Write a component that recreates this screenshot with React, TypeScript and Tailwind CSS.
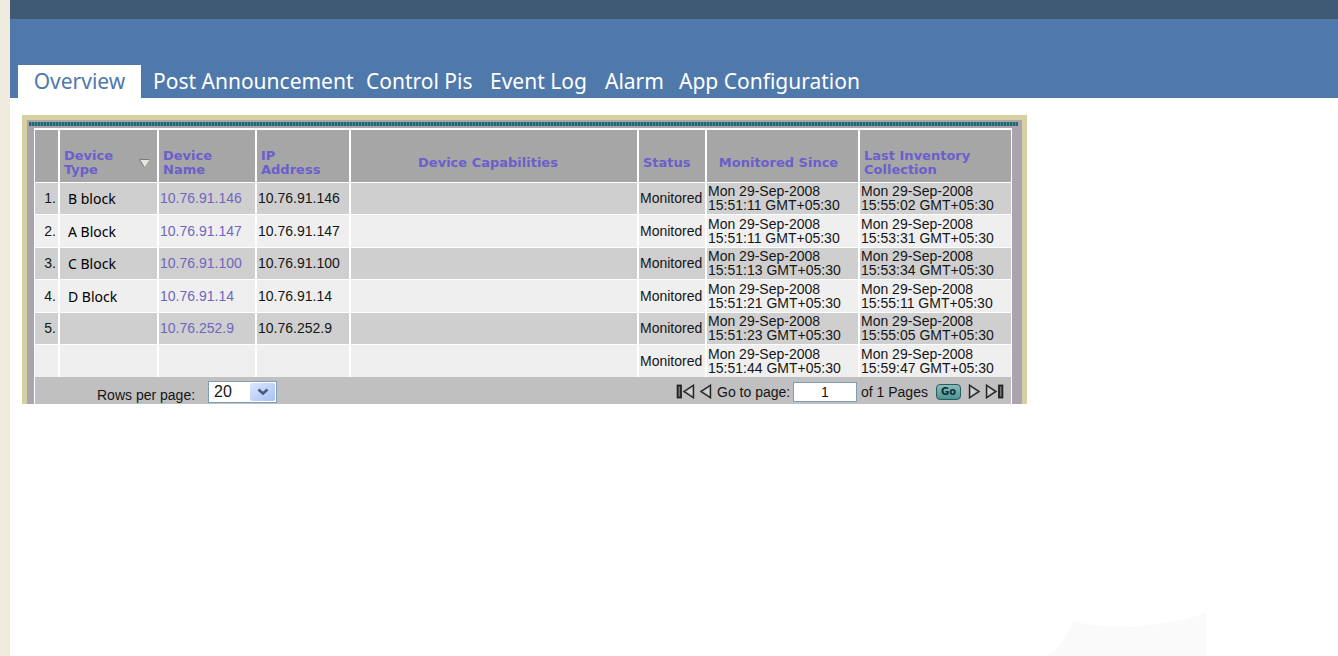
import { useState } from "react";

const tabs = [
  { label: "Post Announcement", width: "w-[213px]" },
  { label: "Control Pis", width: "w-[124px]" },
  { label: "Event Log", width: "w-[115px]" },
  { label: "Alarm", width: "w-[74px]" },
  { label: "App Configuration", width: "w-[200px]" },
];

const rows = [
  { n: "1.", type: "B block", ip: "10.76.91.146", since: "15:51:11", last: "15:55:02" },
  { n: "2.", type: "A Block", ip: "10.76.91.147", since: "15:51:11", last: "15:53:31" },
  { n: "3.", type: "C Block", ip: "10.76.91.100", since: "15:51:13", last: "15:53:34" },
  { n: "4.", type: "D Block", ip: "10.76.91.14", since: "15:51:21", last: "15:55:11" },
  { n: "5.", type: "", ip: "10.76.252.9", since: "15:51:23", last: "15:55:05" },
  { n: "", type: "", ip: "", since: "15:51:44", last: "15:59:47" },
];

function Stamp({ time }: { time: string }) {
  return (
    <>
      Mon 29-Sep-2008
      <br />
      {time} GMT+05:30
    </>
  );
}

function PagerIcon({ forward, edge }: { forward?: boolean; edge?: boolean }) {
  const width = edge ? 19 : 12;
  return (
    <svg
      width={width}
      height="15"
      viewBox={`0 0 ${width} 15`}
      className={forward ? "" : "rotate-180"}
      fill="#b4b4b4"
      stroke="#222"
      strokeWidth="1.4"
      aria-hidden="true"
    >
      <path d="M1.5 1.2V13.8L11 7.5Z" />
      <path d="M3 4V11L8 7.5Z" fill="#d4d4d4" stroke="none" />
      {edge && <rect x="14" y="1.5" width="3.4" height="12" fill="#777" strokeWidth="1.8" />}
    </svg>
  );
}

function Header() {
  return (
    <header className="border-t-[19px] border-[#3f5b74] bg-[#4f79ab] pt-[46px]">
      <nav className="flex h-[33px] pl-2 font-['Noto_Sans',sans-serif] text-[21px] leading-8 whitespace-nowrap text-white">
        <a href="#overview" className="w-[123px] bg-white text-center text-[#4f79ab]">
          Overview
        </a>
        <div className="flex pl-3">
          {tabs.map((t) => (
            <a key={t.label} href="#tab" className={t.width}>
              {t.label}
            </a>
          ))}
        </div>
      </nav>
    </header>
  );
}

const cell = "border-l-2 border-white p-0 pl-px";
const head = "border-l-2 border-white p-0 pl-1 pt-[15px] text-left";

function DeviceTable() {
  return (
    <table className="w-full table-fixed border-collapse leading-[14px]">
      <colgroup>
        <col className="w-[24px]" />
        <col className="w-[99px]" />
        <col className="w-[98px]" />
        <col className="w-[94px]" />
        <col />
        <col className="w-[68px]" />
        <col className="w-[153px]" />
        <col className="w-[152px]" />
      </colgroup>
      <thead>
        <tr className="h-[52px] bg-[#a6a6a6] font-['DejaVu_Sans',sans-serif] text-[13px] leading-[14px] text-[#6a5fcb]">
          <th />
          <th className={head}>
            <div className="flex items-center justify-between pr-[7px]">
              <span>
                Device
                <br />
                Type
              </span>
              <svg width="11" height="9" viewBox="0 0 11 9" aria-hidden="true">
                <path d="M0.5 0.5H10.5L5.5 8.5Z" fill="#e6e6dc" />
                <path d="M0.5 0.5H10.5M0.5 0.5L5.5 8.5" stroke="#7c7c7c" fill="none" />
              </svg>
            </div>
          </th>
          <th className={head}>
            Device
            <br />
            Name
          </th>
          <th className={head}>
            IP
            <br />
            Address
          </th>
          <th className="border-l-2 border-white p-0 pt-[15px] pr-3">Device Capabilities</th>
          <th className={head}>Status</th>
          <th className="border-l-2 border-white p-0 pt-[15px] pr-2">Monitored Since</th>
          <th className={head}>
            Last Inventory
            <br />
            Collection
          </th>
        </tr>
      </thead>
      <tbody>
        {rows.map((r) => (
          <tr
            key={r.since + r.last}
            className="border-t border-white odd:h-8 odd:bg-[#cfcfcf] even:h-[33px] even:bg-[#efefef]"
          >
            <td className="p-0 pr-[2px] text-right">{r.n}</td>
            <td className="border-l-2 border-white p-0 pt-[2px] pl-2 font-['Noto_Sans',sans-serif] text-sm leading-[14px] text-black">
              {r.type}
            </td>
            <td className={cell}>
              {r.ip && (
                <a href="#device" className="text-[#7066bd]">
                  {r.ip}
                </a>
              )}
            </td>
            <td className={cell}>{r.ip}</td>
            <td className={cell} />
            <td className={cell}>Monitored</td>
            <td className={cell}>
              <Stamp time={r.since} />
            </td>
            <td className={cell}>
              <Stamp time={r.last} />
            </td>
          </tr>
        ))}
      </tbody>
    </table>
  );
}

function Pager() {
  const [size, setSize] = useState("20");
  const [page, setPage] = useState("1");
  return (
    <div className="flex h-[27px] items-center justify-between bg-[#c0c0c0] pt-[2px] pr-[7px] pl-[62px]">
      <div className="flex items-center">
        <label htmlFor="rows" className="w-[111px] pt-[6px] whitespace-nowrap">
          Rows per page:
        </label>
        <div className="relative">
          <select
            id="rows"
            value={size}
            onChange={(e) => setSize(e.target.value)}
            className="block h-[22px] w-[69px] appearance-none border border-[#7f9db9] bg-white pl-[5px] text-base leading-5"
          >
            <option>20</option>
            <option>50</option>
          </select>
          <span className="pointer-events-none absolute inset-y-[2px] right-[2px] flex w-[25px] items-center justify-center rounded-xs bg-linear-to-br from-[#dbe6fe] to-[#a9c1f3]">
            <svg width="12" height="8" viewBox="0 0 12 8" aria-hidden="true">
              <path d="M1.5 1.5L6 5.5L10.5 1.5" fill="none" stroke="#46597f" strokeWidth="2.6" />
            </svg>
          </span>
        </div>
      </div>
      <div className="flex items-center">
        <button type="button" aria-label="First page" className="mr-[5px]">
          <PagerIcon edge />
        </button>
        <button type="button" aria-label="Previous page" className="mr-[5px]">
          <PagerIcon />
        </button>
        <label htmlFor="page" className="w-[76px] whitespace-nowrap">
          Go to page:
        </label>
        <input
          id="page"
          value={page}
          onChange={(e) => setPage(e.target.value)}
          className="mr-1 h-5 w-16 border border-[#7f9db9] bg-white text-center"
        />
        <span className="w-[75px] whitespace-nowrap">of 1 Pages</span>
        <button
          type="button"
          className="mr-[7px] h-4 w-[25px] rounded border border-[#285b5d] bg-linear-to-b from-[#8cbcbc] to-[#4c9494] font-['DejaVu_Sans',sans-serif] text-[10px] leading-3 font-bold text-[#0d2c30]"
        >
          Go
        </button>
        <button type="button" aria-label="Next page" className="mr-[5px]">
          <PagerIcon forward />
        </button>
        <button type="button" aria-label="Last page">
          <PagerIcon forward edge />
        </button>
      </div>
    </div>
  );
}

export default function App() {
  return (
    <div className="flex min-h-screen flex-col overflow-hidden border-l-10 border-[#efebdf] bg-white font-['Liberation_Sans',Arial,sans-serif] text-sm leading-[14px] text-[#151515]">
      <Header />
      <main className="flex grow flex-col pt-[17px] pl-3">
        <section className="w-full max-w-[1005px] border-x-[5px] border-t-[5px] border-[#d5d0a0] bg-[#aba4b0]">
          <div className="mt-[2px] mr-1 ml-[2px] h-1 bg-[repeating-linear-gradient(90deg,#26686a_0_2px,#4b8d8f_2px_3px)]" />
          <div className="mt-[2px] mr-[10px] ml-[7px] border-x border-t-2 border-white">
            <DeviceTable />
            <Pager />
          </div>
        </section>
        <svg
          width="160"
          height="44"
          viewBox="0 0 160 44"
          className="mt-auto ml-[1024px] shrink-0"
          fill="#fafafa"
          aria-hidden="true"
        >
          <path d="M0 44Q18 34 27 9Q70 20 112 12Q140 9 160 0V44Z" />
        </svg>
      </main>
    </div>
  );
}
